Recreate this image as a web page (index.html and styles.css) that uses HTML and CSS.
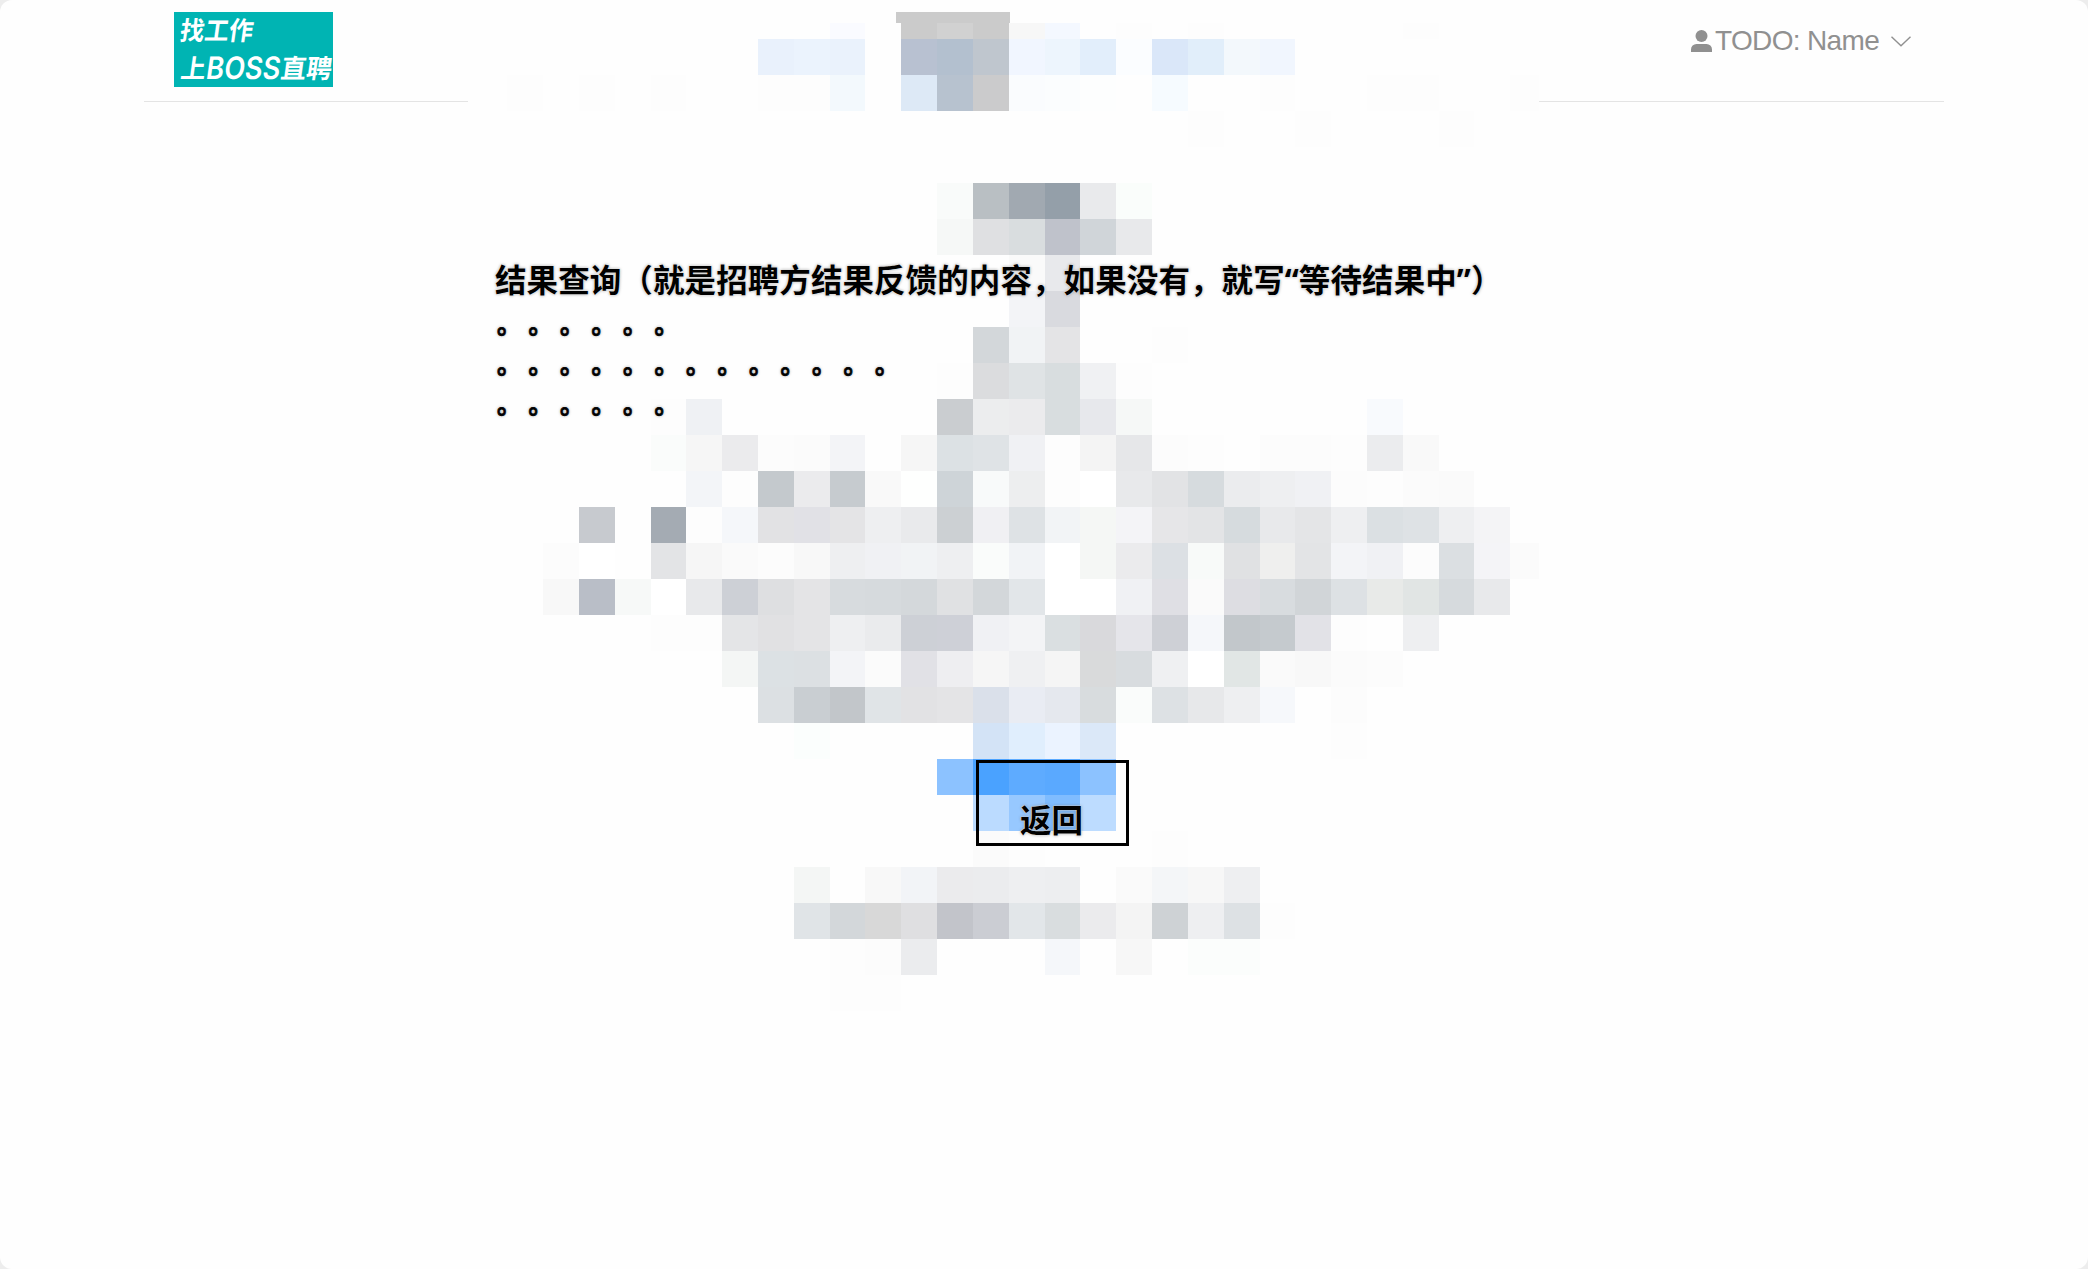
FILE: index.html
```
<!DOCTYPE html>
<html lang="zh-CN">
<head>
<meta charset="utf-8">
<title>结果查询</title>
<link rel="stylesheet" href="styles.css">
</head>
<body>
<div class="page">
  <header class="header">
    <svg class="logo" viewBox="0 0 159 75" role="img" aria-label="BOSS直聘">
      <rect class="logo-bg" width="159" height="75"/>
      <g class="logo-text" transform="skewX(-8)">
        <text x="9" y="27.5" textLength="73" lengthAdjust="spacingAndGlyphs">找工作</text>
        <text x="15" y="66" textLength="25" lengthAdjust="spacingAndGlyphs">上</text>
        <text class="latin" x="40.500" y="67" textLength="74" lengthAdjust="spacingAndGlyphs">BOSS</text>
        <text x="115" y="66" textLength="51" lengthAdjust="spacingAndGlyphs">直聘</text>
      </g>
    </svg>
    <div class="user">
      <svg class="user-icon" viewBox="0 0 21 22"><circle cx="10.500" cy="6" r="6"/><path d="M0 22v-2.500a5.500 5.500 0 0 1 5.500-5.500h10a5.500 5.500 0 0 1 5.500 5.500V22z"/></svg>
      <span class="user-name">TODO: Name</span>
      <svg class="chevron" viewBox="0 0 20 11"><path d="M.5.8 10 9.800 19.500.8"/></svg>
    </div>
  </header>
  <svg class="mosaic" viewBox="0 0 1071 997" shape-rendering="crispEdges"></svg>
  <div class="tab"></div>
  <main class="content">
    <h1 class="line title">结果查询（就是招聘方结果反馈的内容，如果没有，就写“等待结果中”）</h1>
    <p class="line dots">。。。。。。</p>
    <p class="line dots">。。。。。。。。。。。。。</p>
    <p class="line dots">。。。。。。</p>
    <button class="back" type="button">返回</button>
  </main>
</div>
<script src="mosaic.js"></script>
</body>
</html>
```
FILE: styles.css
```
* { box-sizing: border-box; }
body { margin: 0; background: #ededed; }
.page {
  position: relative;
  height: 1269px;
  overflow: hidden;
  border-radius: 12px;
  background: #fefefe;
  font-family: "Noto Sans", "Noto Sans CJK SC", sans-serif;
}
.header {
  display: flex;
  justify-content: space-between;
  align-items: flex-start;
  width: 1800px;
  height: 102px;
  margin: 0 auto;
  padding: 12px 33px 0 30px;
  border-bottom: 1px solid #e4e4e4;
}
.logo { width: 159px; height: 75px; overflow: visible; }
.logo-bg { fill: #00b4b3; }
.logo-text { fill: #fff; font: 700 26px "Noto Sans CJK SC", sans-serif; }
.latin { font: 600 31px Inter, sans-serif; }
.user { display: flex; align-items: center; height: 58px; color: #909090; }
.user-icon { width: 21px; height: 22px; margin-right: 3px; fill: currentColor; }
.user-name { width: 164px; font: 28px/32px "Liberation Sans", Arial, sans-serif; letter-spacing: -.65px; white-space: nowrap; }
.chevron { width: 20px; height: 11px; margin-left: 12px; fill: none; stroke: currentColor; stroke-width: 1.4; }
.mosaic { position: absolute; left: 468px; top: 23px; width: 1071px; height: 997px; background: #fefefe; }
.tab { position: absolute; left: 896px; top: 12px; width: 114px; height: 11px; background: #cbcbcb; }
.content { position: relative; width: 1098px; margin: 0 auto; padding-top: 153px; }
.line {
  margin: 0;
  font-weight: 700;
  line-height: 40px;
  white-space: nowrap;
  color: #000;
  text-shadow: 0 0 1px #fff, 0 0 2px #fff, 0 0 3px rgba(0, 0, 0, .5);
}
.title { margin-bottom: -2px; font-size: 31.5px; line-height: 50px; letter-spacing: .09px; }
.dots {
  padding-left: 2px;
  font-family: "Noto Sans CJK SC", sans-serif;
  font-size: 24px;
  letter-spacing: 7.5px;
  text-spacing-trim: space-all;
  -webkit-text-stroke: .8px #000;
}
.back {
  display: block;
  width: 153px;
  height: 86px;
  margin: 337px 0 0 481px;
  padding: 30px 2px 0 0;
  border: 3px solid #000;
  background: transparent;
  color: #000;
  font: 700 31.5px/40px "Noto Sans CJK SC", sans-serif;
  text-shadow: 0 0 1px #fff, 0 0 2px #fff, 0 0 3px rgba(0, 0, 0, .5);
}
```
FILE: mosaic.js
```
// Each row: [row number, first column, colours...]; "-" leaves a cell empty.
const rows = `
0 8 fafbff - cbcbcb d1d1d1 cbcbcb f7f7f7 f4f8ff - fdfdfd - fdfdfd - - - - - fdfdfd
1 6 e9f1fc ebf3fd eaf2fc - b8c1d1 b3c0cf bfc6ce f1f6ff edf5fd e2eefb fbfdff dae7f9 e1eefa f3f8fc f1f6fe
2 -1 fdfdfd - fdfdfd - fdfdfd - - fdfdfd fdfdfd f3f9fd - dde9f6 b7c2cf cbcbcc fafcfe fbfdfe fdfefe - f6fbff - - fdfdfd - - fdfdfd fdfdfd - - fdfdfd
3 18 fdfdfd - - fdfdfd - - - fdfdfd
5 11 f9fbfa b9bfc3 a1a9b1 949fa9 e9eaec fafdfb
6 11 f6f8f7 dfe0e2 d9dddf bfc2cb d0d5d9 e8e9eb
7 13 fafafa e8e9ec
8 13 f3f4f7 d9dadf
9 12 d3d7da f1f3f5 e4e4e6 - - fdfdfd
10 11 fdfdfd dbdcde dfe3e5 d8dddf f0f1f3 fdfdfd
11 3 fdfdfd eff1f4 - - - - - - cacdd0 ecedee ebebed d8dddf e7e8ec f6f8f7 - - - - - - f8fafd
12 3 fafcfb f6f6f6 ebebed fcfcfc fbfbfb f3f4f7 fefefe f6f6f6 dce1e4 dfe3e6 f0f1f4 fdfdfd f4f4f4 e6e7e9 fcfcfc fdfdfd - fcfcfc fcfcfc fdfdfd ebecee f9f9f9
13 4 f3f5f8 fdfdfd c4c9cd ebebed c6cbcf f9f9f9 fefffe ced4d8 f8fafa edeeef fdfdfd ffffff e8e9eb e2e3e5 d6dbde ebecee eeeff1 f0f1f4 fcfcfc fdfdfd fbfbfb fafafa fefefe
14 1 c7cacf - a4abb3 fdfdfd f5f7fa e2e2e4 e1e1e6 e4e4e6 eeeff1 e9eaec ccd0d3 f0f0f3 dee2e5 f2f4f6 f5f7f5 f4f4f7 e6e6e8 e3e4e6 d6dbde e8e9eb e4e5e7 eeeff1 dbe0e3 dee2e5 eeeff1 f4f4f6
15 0 fcfcfc ffffff fefefe e3e4e6 f6f6f6 fafafa fcfcfc f8f8f8 eeeff1 f0f1f4 f1f3f5 eeeff1 fafcfb f1f3f6 ffffff f5f7f5 ebebed dce0e4 f8faf9 e0e1e3 efefee e3e4e6 f3f4f7 f0f1f4 fcfcfc dbdfe2 f4f4f7 fbfbfb
16 0 f8f8f8 b9bec7 f7f9f8 ffffff e8e9eb cdd0d6 dedfe1 e4e4e6 d7dbde d6dadd d4d8db e0e1e3 d3d7da e2e6e9 ffffff ffffff f0f1f4 dfdfe4 fafafa dddde2 d8dcdf d1d5d8 dde1e4 e8eae8 e1e5e4 d6dadd e8e9eb
17 3 fdfdfd fdfdfd e4e5e7 e1e1e3 e4e4e6 eeeff1 eaebed cdd0d6 ced0d7 f0f1f4 f3f4f6 dadfe1 d9d9dc e5e5ea ced0d6 f5f7fa c2c7cb c5cace e2e2e7 fdfdfd - eeeff1
18 5 f4f6f5 dce1e4 dce0e3 f3f4f7 fbfbfb e1e1e6 eeeef1 f6f6f6 eff0f2 f5f5f5 d9dadb d8dcdf eff0f2 ffffff e1e6e5 fafafa f8f8f8 fbfbfb fcfcfc
19 6 dce0e3 c9ced2 c2c6ca e0e4e7 e2e2e4 e4e4e6 dae0ea e9ecf3 e5e8ee d8dcde fafcfb dde1e4 e7e8ea eeeff1 f6f8fb - fcfcfc
20 7 fbfefd - - - - d3e3f6 e0eefd ebf3ff dbe8f8 - - - - - - fdfdfd
21 11 8cc2ff 4aa2ff 5eabff 5aa9ff 8cc2ff
22 12 bbdbff 97c8ff 7fbcff bddcff
23 12 fbfbfb fdfdfd - - - fdfdfd
24 7 f4f6f5 fefefe f8f8f8 f2f4f7 ebebed ebecee eeeff1 edeef0 - fafafa f4f6f8 f7f7f7 eeeff1
25 7 e0e4e7 d3d7da d8d8d8 dfdfe1 c2c4ca cbcdd3 e2e6e9 d9dddf ebebed f4f4f4 ced2d5 eeeff1 dde1e4 fdfdfd
26 8 fdfdfd fcfcfc ebecee - - - f5f7fa - f7f7f7 - fbfdfc fbfdfc
27 8 fdfdfd fdfdfd`;

const mosaic = document.querySelector(".mosaic");
const edge = column => Math.floor(75.6 + column * 35.82);

for (const row of rows.trim().split("\n")) {
  const [line, first, ...colours] = row.split(" ");
  colours.forEach((colour, i) => {
    if (colour === "-") return;
    const column = Number(first) + i;
    const top = Math.max(0, line * 36 - 20);
    const rect = document.createElementNS("http://www.w3.org/2000/svg", "rect");
    rect.setAttribute("x", edge(column));
    rect.setAttribute("y", top);
    rect.setAttribute("width", Math.min(1071, edge(column + 1)) - edge(column));
    rect.setAttribute("height", line * 36 + 16 - top);
    rect.setAttribute("fill", "#" + colour);
    mosaic.append(rect);
  });
}
```
